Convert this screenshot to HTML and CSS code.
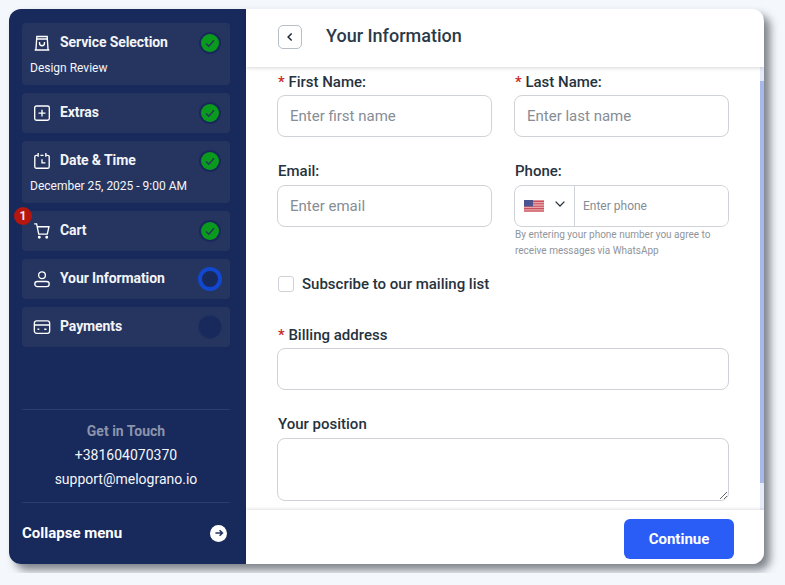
FILE: index.html
```html
<!DOCTYPE html>
<html lang="en">
<head>
    <meta charset="UTF-8">
    <meta name="viewport" content="width=device-width, initial-scale=1.0">
    <title>Your Information</title>
    <link rel="stylesheet" href="styles.css">
</head>
<body>
    <div class="card">
        <aside class="sidebar">
            <div class="steps">
                <div class="step">
                    <div class="step-row">
                        <svg class="step-icon" viewBox="0 0 16 16"><path d="M1.5 14.2h13M2.6 14.2 3.4 2.2h9.2l.8 12M3.2 4.4h9.6M5.8 7v1.2a2.2 2.2 0 0 0 4.4 0V7"/></svg>
                        <span class="step-name">Service Selection</span>
                        <span class="status done"><svg viewBox="0 0 12 12"><path d="M2 6.5 4.8 9.2 10 3.2"/></svg></span>
                    </div>
                    <div class="step-value">Design Review</div>
                </div>
                <div class="step">
                    <div class="step-row">
                        <svg class="step-icon" viewBox="0 0 16 16"><rect x="1.5" y="1.8" width="13" height="12.6" rx="1.6"/><path d="M8 5v6.2M4.9 8.1h6.2"/></svg>
                        <span class="step-name">Extras</span>
                        <span class="status done"><svg viewBox="0 0 12 12"><path d="M2 6.5 4.8 9.2 10 3.2"/></svg></span>
                    </div>
                </div>
                <div class="step">
                    <div class="step-row">
                        <svg class="step-icon" viewBox="0 0 16 16"><path d="M4.6 3H3a1.4 1.4 0 0 0-1.4 1.4v8.6A1.4 1.4 0 0 0 3 14.4h10a1.4 1.4 0 0 0 1.4-1.4V4.4A1.4 1.4 0 0 0 13 3h-1.6M4.6.8v3.4M11.4.8v3.4M6.6 3h2.8M8 6.4v3.2h3"/></svg>
                        <span class="step-name">Date &amp; Time</span>
                        <span class="status done"><svg viewBox="0 0 12 12"><path d="M2 6.5 4.8 9.2 10 3.2"/></svg></span>
                    </div>
                    <div class="step-value">December 25, 2025 - 9:00 AM</div>
                </div>
                <div class="step">
                    <span class="badge">1</span>
                    <div class="step-row">
                        <svg class="step-icon" viewBox="0 0 16 16"><path d="M1 1.6h2.2l1.9 9.2h7.6l1.5-6.6H3.8"/><circle cx="5.6" cy="13.6" r=".7"/><circle cx="12.2" cy="13.6" r=".7"/></svg>
                        <span class="step-name">Cart</span>
                        <span class="status done"><svg viewBox="0 0 12 12"><path d="M2 6.5 4.8 9.2 10 3.2"/></svg></span>
                    </div>
                </div>
                <div class="step">
                    <div class="step-row">
                        <svg class="step-icon" viewBox="0 0 16 16"><circle cx="8" cy="4.6" r="3"/><rect x="1.6" y="10.2" width="12.8" height="4.6" rx="2.3"/></svg>
                        <span class="step-name">Your Information</span>
                        <span class="status active"></span>
                    </div>
                </div>
                <div class="step">
                    <div class="step-row">
                        <svg class="step-icon" viewBox="0 0 16 16"><rect x="1.2" y="2.6" width="13.6" height="11" rx="2"/><path d="M1.2 6.2h13.6M4 10h1.6M10 10h2"/></svg>
                        <span class="step-name">Payments</span>
                        <span class="status"></span>
                    </div>
                </div>
            </div>

            <div class="contact">
                <div class="contact-title">Get in Touch</div>
                <div>+381604070370</div>
                <div>support@melograno.io</div>
            </div>
            <div class="collapse">
                <span>Collapse menu</span>
                <span class="collapse-btn"><svg viewBox="0 0 12 12"><path d="M2.4 6h7M6.6 3.2 9.4 6 6.6 8.8"/></svg></span>
            </div>
        </aside>

        <main class="main">
            <header class="main-header">
                <button class="back" type="button"><svg viewBox="0 0 10 10"><path d="M6.4 2 3.4 5l3 3"/></svg></button>
                <h1>Your Information</h1>
            </header>

            <div class="content">
                <form class="form">
                    <div class="two-col first-row">
                        <div class="field">
                            <label><span class="req">*</span> First Name:</label>
                            <input type="text" placeholder="Enter first name">
                        </div>
                        <div class="field">
                            <label><span class="req">*</span> Last Name:</label>
                            <input type="text" placeholder="Enter last name">
                        </div>
                    </div>
                    <div class="two-col second-row">
                        <div class="field">
                            <label>Email:</label>
                            <input type="text" placeholder="Enter email">
                        </div>
                        <div class="field">
                            <label>Phone:</label>
                            <div class="phone">
                                <div class="country">
                                    <svg class="flag" viewBox="0 0 20 12">
                                        <rect width="20" height="12" fill="#e8a6ab"/>
                                        <path d="M0 1.4h20M0 3.8h20M0 6.2h20M0 8.6h20M0 11h20" stroke="#c8505c" stroke-width="1.1"/>
                                        <rect width="9" height="6.4" fill="#4a5590"/>
                                    </svg>
                                    <svg class="chevron" viewBox="0 0 12 12"><path d="M1.6 3.6 6 8l4.4-4.4"/></svg>
                                </div>
                                <input type="text" placeholder="Enter phone">
                            </div>
                            <p class="hint">By entering your phone number you agree to receive messages via WhatsApp</p>
                        </div>
                    </div>
                    <label class="subscribe"><span class="checkbox"></span>Subscribe to our mailing list</label>
                    <div class="field billing">
                        <label><span class="req">*</span> Billing address</label>
                        <input type="text">
                    </div>
                    <div class="field position">
                        <label>Your position</label>
                        <textarea></textarea>
                    </div>
                </form>
                <div class="scrollbar"><div class="scrollbar-thumb"></div></div>
            </div>

            <footer class="main-footer">
                <button class="continue" type="button">Continue</button>
            </footer>
        </main>
    </div>
</body>
</html>
```

FILE: styles.css
```css
:root {
    --navy: #18295b;
    --navy-light: #26355f;
    --blue: #2a5cf6;
    --text-color: #26323d;
    --border: #cfd2d6;
}

* {
    box-sizing: border-box;
}

body {
    font-family: Roboto, 'Liberation Sans', sans-serif;
    color: var(--text-color);
    background-color: #f4f7fb;
    margin: 0;
    padding: 9px;
    overflow: hidden;
}

.card {
    display: flex;
    width: 755px;
    height: 555px;
    border-radius: 12px;
    overflow: hidden;
    background: white;
    box-shadow: 6px 6px 9px rgba(30, 35, 45, 0.55);
}

/* sidebar */

.sidebar {
    width: 237px;
    flex-shrink: 0;
    display: flex;
    flex-direction: column;
    background-color: var(--navy);
    color: white;
    padding: 14px 16px 0 13px;
}

.steps {
    display: flex;
    flex-direction: column;
    gap: 8px;
    height: 387px;
    flex-shrink: 0;
    border-bottom: 1px solid #2c3c6b;
}

.step {
    position: relative;
    background-color: var(--navy-light);
    border-radius: 4px;
    padding: 8px 8px 0;
    min-height: 40px;
}

.step-row {
    display: flex;
    align-items: center;
    height: 24px;
}

.step-icon {
    width: 18px;
    height: 18px;
    margin: 0 9px 0 3px;
    fill: none;
    stroke: white;
    stroke-width: 1.2;
    flex-shrink: 0;
}

.step-name {
    font-size: 14px;
    font-weight: 700;
    letter-spacing: -0.1px;
    color: #f2f4f8;
    flex: 1;
    position: relative;
    top: -1px;
}

.step-value {
    font-size: 12px;
    font-weight: 400;
    color: #f4f6fa;
    height: 30px;
    padding-top: 6px;
}

.status {
    width: 24px;
    height: 24px;
    border-radius: 50%;
    background-color: var(--navy);
    border: 1px solid #1f2f60;
    display: flex;
    align-items: center;
    justify-content: center;
}

.status.done {
    background-color: #099a1e;
    border: 0;
    box-shadow: 0 0 0 2px var(--navy);
    width: 18px;
    height: 18px;
    margin: 0 3px;
}

.status.done svg {
    width: 12px;
    height: 12px;
    fill: none;
    stroke: #26355f;
    stroke-width: 1.4;
}

.status.active {
    border: 4px solid #1247d0;
}

.badge {
    position: absolute;
    left: -8px;
    top: -4px;
    width: 18px;
    height: 18px;
    border-radius: 50%;
    background-color: #b5170f;
    color: #f5e8e8;
    font-size: 12px;
    font-weight: 700;
    line-height: 18px;
    text-align: center;
}

.contact {
    display: flex;
    flex-direction: column;
    gap: 6px;
    font-size: 14px;
    line-height: 18px;
    text-align: center;
    color: #f4f6fa;
    padding: 12px 0 14px;
    height: 93px;
    flex-shrink: 0;
    border-bottom: 1px solid #2c3c6b;
}

.contact-title {
    font-weight: 700;
    color: #8c94ac;
}

.collapse {
    display: flex;
    align-items: center;
    justify-content: space-between;
    font-size: 15px;
    font-weight: 700;
    padding: 21px 3px 0 0;
}

.collapse-btn {
    width: 17px;
    height: 17px;
    border-radius: 50%;
    background-color: white;
    display: flex;
    align-items: center;
    justify-content: center;
}

.collapse-btn svg {
    width: 12px;
    height: 12px;
    fill: none;
    stroke: #26355f;
    stroke-width: 1.6;
}

/* main column */

.main {
    flex: 1;
    display: flex;
    flex-direction: column;
    min-width: 0;
}

.main-header {
    height: 58px;
    flex-shrink: 0;
    display: flex;
    align-items: center;
    padding-left: 32px;
    box-shadow: 0 1px 4px rgba(0, 0, 0, 0.16);
    position: relative;
    z-index: 1;
}

.main-header h1 {
    font-size: 18px;
    font-weight: 500;
    color: #2c3a48;
    margin: 0 0 6px 24px;
}

.back {
    width: 24px;
    height: 24px;
    padding: 0;
    margin-bottom: 2px;
    background: white;
    border: 1px solid #b8bec6;
    border-radius: 5px;
    display: flex;
    align-items: center;
    justify-content: center;
}

.back svg {
    width: 12px;
    height: 12px;
    fill: none;
    stroke: #1c2530;
    stroke-width: 1.2;
}

.content {
    flex: 1;
    display: flex;
    min-height: 0;
    overflow: hidden;
}

.form {
    flex: 1;
    padding: 7px 31px 0;
}

.scrollbar {
    width: 4px;
    background-color: #e6ebfa;
    padding-top: 14px;
}

.scrollbar-thumb {
    height: 402px;
    background-color: #a8b8ea;
}

.two-col {
    display: grid;
    grid-template-columns: 215px 215px;
    gap: 22px;
}

.first-row {
    height: 89px;
}

.field label {
    display: block;
    font-size: 15px;
    font-weight: 500;
    line-height: 16px;
    margin: 0 0 5px 1px;
}

.second-row label,
.position label {
    margin-bottom: 6px;
}

.req {
    color: #c9281e;
}

input,
textarea {
    font-family: inherit;
    color: var(--text-color);
    display: block;
    width: 100%;
    background: white;
    border: 1px solid var(--border);
    border-radius: 8px;
    outline: none;
}

input {
    height: 42px;
    font-size: 15px;
    padding: 0 12px;
}

input::placeholder {
    color: #868d96;
}

textarea {
    height: 63px;
}

.phone {
    display: flex;
    height: 42px;
    border: 1px solid var(--border);
    border-radius: 8px;
    overflow: hidden;
}

.country {
    width: 60px;
    flex-shrink: 0;
    display: flex;
    align-items: center;
    justify-content: space-between;
    padding: 0 8px 0 9px;
    border-right: 1px solid var(--border);
}

.flag {
    width: 20px;
    height: 12px;
}

.chevron {
    width: 12px;
    height: 12px;
    fill: none;
    stroke: #2a3440;
    stroke-width: 1.3;
    margin-top: -4px;
}

.phone input {
    border: 0;
    border-radius: 0;
    height: 100%;
    font-size: 12px;
    padding: 0 8px;
    min-width: 0;
}

.hint {
    font-size: 10px;
    line-height: 16px;
    color: #8f959c;
    margin: 0;
    padding: 0 1px;
    height: 32px;
}

.subscribe {
    display: flex;
    align-items: center;
    gap: 8px;
    font-size: 15px;
    font-weight: 500;
    margin: 15px 0 0 1px;
    height: 20px;
}

.checkbox {
    width: 16px;
    height: 16px;
    border: 1px solid var(--border);
    border-radius: 3px;
    background: white;
}

.billing {
    margin-top: 33px;
}

.position {
    margin-top: 26px;
}

.main-footer {
    height: 54px;
    flex-shrink: 0;
    display: flex;
    align-items: flex-start;
    justify-content: flex-end;
    padding: 9px 30px 0 0;
    background: white;
    box-shadow: 0 -1px 3px rgba(0, 0, 0, 0.12);
    position: relative;
}

.continue {
    width: 110px;
    height: 40px;
    border: 0;
    border-radius: 6px;
    background-color: var(--blue);
    color: white;
    font-family: inherit;
    font-size: 15px;
    font-weight: 700;
}
```
